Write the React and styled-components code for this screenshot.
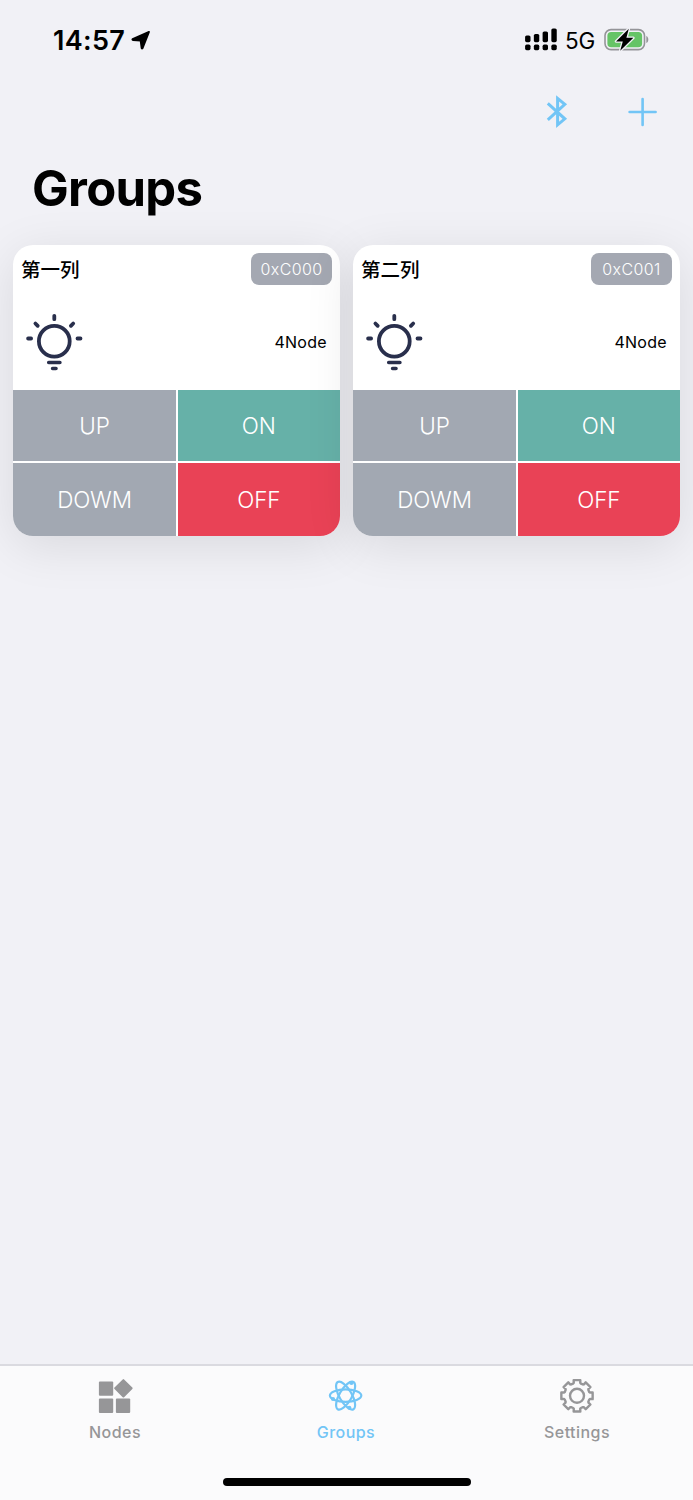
import React from "react";

import styled, { createGlobalStyle } from "styled-components";

const GlobalStyle = createGlobalStyle`
  * {
    box-sizing: border-box;
  }

  body {
    margin: 0;
    background: #f1f1f6;
    font-family: Inter, "Noto Sans CJK SC", sans-serif;
    color: #000;
  }
`;

const StyledScreen = styled.div`
  display: flex;
  flex-direction: column;
  width: 693px;
  height: 1500px;
  overflow: hidden;
  background: #f1f1f6;
`;

const StyledStatusBar = styled.header`
  display: flex;
  justify-content: space-between;
  height: 80px;
  padding: 0 44px 0 53px;
`;

const StyledStatusGroup = styled.div`
  display: flex;
  align-items: center;
  height: 79px;
`;

const StyledTime = styled.span`
  width: 72px;
  margin: 2px 6px 0 0;
  font-size: 27px;
  font-weight: 600;
  letter-spacing: 0.3px;
  white-space: nowrap;
`;

const StyledNetwork = styled.span`
  width: 30px;
  margin: 2px 9px 0 8px;
  font-size: 22.5px;
  letter-spacing: -0.2px;
`;

const StyledToolbar = styled.div`
  display: flex;
  justify-content: flex-end;
  align-items: center;
  gap: 60px;
  height: 64px;
  padding-right: 35px;
`;

const StyledTitle = styled.h1`
  height: 101px;
  margin: 0;
  padding: 15px 0 0 32px;
  font-size: 49px;
  line-height: 60px;
  font-weight: 700;
  letter-spacing: -0.7px;
`;

const StyledGroups = styled.main`
  flex: 1;
  display: grid;
  grid-template-columns: 327px 327px;
  align-content: start;
  gap: 13px;
  padding: 0 13px;
`;

const StyledCard = styled.section`
  height: 291px;
  border-radius: 20px;
  overflow: hidden;
  background: #fff;
  box-shadow: 0 10px 50px rgba(0, 0, 0, 0.1);
`;

const StyledCardHeader = styled.div`
  display: flex;
  justify-content: space-between;
  padding: 8px 8px 0 8px;
`;

const StyledName = styled.span`
  font-family: "Noto Sans CJK SC", sans-serif;
  font-size: 19.5px;
  font-weight: 500;
  line-height: 32px;
`;

const StyledAddress = styled.span`
  width: 81px;
  height: 32px;
  border-radius: 8px;
  background: #a4a8b2;
  color: #fff;
  font-size: 16px;
  font-weight: 350;
  line-height: 33px;
  letter-spacing: 0.4px;
  text-align: center;
`;

const StyledCardBody = styled.div`
  display: flex;
  justify-content: space-between;
  align-items: center;
  height: 105px;
  padding: 8px 13px 0 12px;
`;

const StyledCount = styled.span`
  font-size: 16px;
  letter-spacing: 0.3px;
`;

const StyledControls = styled.div`
  display: grid;
  grid-template-columns: 163px 162.5px;
  grid-template-rows: 71px 73px;
  gap: 1.5px;
  padding-top: 0.4px;
`;

const StyledControl = styled.button`
  border: 0;
  padding: 0;
  background: ${(props) => props.$color};
  color: #fff;
  font-family: inherit;
  font-size: 22.5px;
  font-weight: 350;
  letter-spacing: -0.2px;
`;

const StyledTabBar = styled.nav`
  height: 136px;
  border-top: 2px solid #dadae0;
  background: #fbfbfc;
`;

const StyledTabs = styled.div`
  display: grid;
  grid-template-columns: repeat(3, 1fr);
  height: 112px;
`;

const StyledTab = styled.div`
  display: flex;
  flex-direction: column;
  align-items: center;
  padding: 12px 1px 0 0;
  color: ${(props) => (props.$active ? "#72c5f6" : "#969698")};
  font-size: 16px;
  font-weight: 500;
  line-height: 20px;
  letter-spacing: 0.45px;

  svg {
    margin-bottom: 8px;
  }
`;

const StyledHomeIndicator = styled.div`
  width: 248px;
  height: 8px;
  margin: 0 auto;
  border-radius: 4px;
  background: #000;
`;

const LocationIcon = () => (
  <svg width="20" height="20" viewBox="0 0 20 20">
    <path
      d="M18 1.8 L1.6 9 Q1 9.8 2 10 L9.6 10.6 L10.6 18.2 Q11 19 11.6 18.2 Z"
      fill="#000"
      stroke="#000"
      strokeWidth="1.8"
      strokeLinejoin="round"
    />
  </svg>
);

const SignalIcon = () => (
  <svg width="32" height="24" viewBox="0 0 32 24">
    {[0, 1, 2, 3].map((i) => {
      const top = [7.5, 6, 3.5, 0.5][i];
      return (
        <g key={i}>
          <rect x={i * 8.75 + 0.1} y={top} width="5.4" height={14.2 - top} rx="1.6" />
          <rect x={i * 8.75 + 0.1} y="16.6" width="5.4" height="5.6" rx="1.6" />
        </g>
      );
    })}
  </svg>
);

const BatteryIcon = () => (
  <svg width="45" height="28" viewBox="0 0 45 28">
    <rect x="1" y="3.6" width="39.5" height="20" rx="6" fill="none" stroke="#949498" strokeWidth="1.6" />
    <rect x="3.4" y="6" width="34.7" height="15.2" rx="3.8" fill="#65c466" />
    <path d="M42.3 10.1 C45 11.1 45 16.1 42.3 17.1 Z" fill="#949498" />
    <path
      d="M24.8 2.8 L12 15.4 H18.8 L16.2 24.8 L29.4 11.8 H22.4 Z"
      fill="#000"
      stroke="#f1f1f6"
      strokeWidth="2.6"
      strokeLinejoin="round"
      paintOrder="stroke"
    />
  </svg>
);

const BluetoothIcon = () => (
  <svg width="22" height="34" viewBox="0 0 22 34">
    <path
      d="M1.8 8.4 L18.8 23.8 L11.6 29.8 V3.4 L18.8 9.4 L1.8 24.8"
      fill="none"
      stroke="#72c5f6"
      strokeWidth="3"
    />
  </svg>
);

const PlusIcon = () => (
  <svg width="30" height="30" viewBox="0 0 30 30">
    <path d="M14.6 2 V28 M1.6 15 H27.6" stroke="#72c5f6" strokeWidth="2.6" strokeLinecap="round" />
  </svg>
);

const BulbIcon = () => (
  <svg width="58" height="58" viewBox="0 0 58 58">
    <g fill="none" stroke="#292f4c" strokeWidth="3.8" strokeLinecap="round">
      <circle cx="29.3" cy="28.2" r="15.4" />
      <path d="M29.3 2.8 V6.2 M3.1 25.5 H6.1 M52.5 25.5 H55.5 M10.4 10.5 L12.7 12.8 M48.2 10.5 L45.9 12.8" />
      <path d="M23.7 49.5 H34.9 M27.6 55.5 H31" strokeWidth="3.6" />
    </g>
  </svg>
);

const NodesIcon = () => (
  <svg width="36" height="36" viewBox="0 0 36 36" fill="currentColor">
    <rect x="1.9" y="3.4" width="14.3" height="14.3" rx="1" />
    <rect x="1.9" y="20.6" width="14.3" height="14.3" rx="1" />
    <rect x="18.9" y="20.6" width="14.3" height="14.3" rx="1" />
    <rect x="19.6" y="3.5" width="13.6" height="13.6" rx="1" transform="rotate(45 26.4 10.3)" />
  </svg>
);

const GroupsIcon = () => (
  <svg width="36" height="36" viewBox="0 0 36 36">
    <g fill="none" stroke="currentColor" strokeWidth="2.2">
      <ellipse cx="17.6" cy="17.6" rx="15.7" ry="6.2" />
      <ellipse cx="17.6" cy="17.6" rx="15.7" ry="6.2" transform="rotate(60 17.6 17.6)" />
      <ellipse cx="17.6" cy="17.6" rx="15.7" ry="6.2" transform="rotate(120 17.6 17.6)" />
    </g>
    <g fill="currentColor">
      <circle cx="5" cy="21" r="2.1" />
      <circle cx="23.4" cy="5" r="2.1" />
      <circle cx="21.3" cy="29.8" r="2.1" />
    </g>
  </svg>
);

// outline of one cog tooth as [angle, radius] pairs, repeated every 45 degrees
const tooth = [
  [-17.5, 12.8],
  [-14, 13.4],
  [-12, 16],
  [12, 16],
  [14, 13.4],
  [17.5, 12.8],
];

const gearPoints = Array.from({ length: 8 })
  .flatMap((_, i) =>
    tooth.map(([angle, radius]) => {
      const a = ((i * 45 + angle) * Math.PI) / 180;
      return `${18 + radius * Math.sin(a)},${17.8 - radius * Math.cos(a)}`;
    })
  )
  .join(" ");

const SettingsIcon = () => (
  <svg width="36" height="36" viewBox="0 0 36 36">
    <g fill="none" stroke="currentColor" strokeWidth="2.4" strokeLinejoin="round">
      <polygon points={gearPoints} />
      <circle cx="18" cy="17.8" r="7" />
    </g>
  </svg>
);

const GroupCard = ({ name, address, count }) => {
  return (
    <StyledCard>
      <StyledCardHeader>
        <StyledName>{name}</StyledName>
        <StyledAddress>{address}</StyledAddress>
      </StyledCardHeader>
      <StyledCardBody>
        <BulbIcon />
        <StyledCount>{count}Node</StyledCount>
      </StyledCardBody>
      <StyledControls>
        <StyledControl $color="#a2a8b2">UP</StyledControl>
        <StyledControl $color="#66b1a8">ON</StyledControl>
        <StyledControl $color="#a2a8b2">DOWM</StyledControl>
        <StyledControl $color="#e94256">OFF</StyledControl>
      </StyledControls>
    </StyledCard>
  );
};

const App = () => {
  return (
    <StyledScreen>
      <GlobalStyle />
      <StyledStatusBar>
        <StyledStatusGroup>
          <StyledTime>14:57</StyledTime>
          <LocationIcon />
        </StyledStatusGroup>
        <StyledStatusGroup>
          <SignalIcon />
          <StyledNetwork>5G</StyledNetwork>
          <BatteryIcon />
        </StyledStatusGroup>
      </StyledStatusBar>

      <StyledToolbar>
        <BluetoothIcon />
        <PlusIcon />
      </StyledToolbar>

      <StyledTitle>Groups</StyledTitle>

      <StyledGroups>
        <GroupCard name="第一列" address="0xC000" count={4} />
        <GroupCard name="第二列" address="0xC001" count={4} />
      </StyledGroups>

      <StyledTabBar>
        <StyledTabs>
          <StyledTab>
            <NodesIcon />
            Nodes
          </StyledTab>
          <StyledTab $active>
            <GroupsIcon />
            Groups
          </StyledTab>
          <StyledTab>
            <SettingsIcon />
            Settings
          </StyledTab>
        </StyledTabs>
        <StyledHomeIndicator />
      </StyledTabBar>
    </StyledScreen>
  );
};

export default App;
